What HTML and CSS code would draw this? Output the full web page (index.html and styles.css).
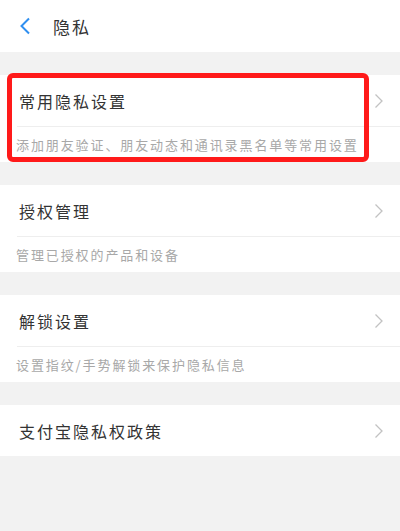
FILE: index.html
```html
<!DOCTYPE html>
<html lang="zh-CN">
<head>
<meta charset="utf-8">
<link rel="stylesheet" href="styles.css">
</head>
<body>
<div class="page">
  <header class="topbar">
    <svg class="back" width="12" height="18" viewBox="0 0 12 18"><path d="M10 1.5 L2.5 9 L10 16.5" fill="none" stroke="#2f8ff0" stroke-width="2"/></svg>
    <span class="title">隐私</span>
  </header>

  <section class="group hl">
    <div class="row"><span class="label">常用隐私设置</span><svg class="chev" width="10" height="16" viewBox="0 0 10 16"><path d="M1.5 1.5 L8 8 L1.5 14.5" fill="none" stroke="#c2c2c2" stroke-width="1.3"/></svg></div>
    <div class="desc">添加朋友验证、朋友动态和通讯录黑名单等常用设置</div>
    <div class="mark"></div>
  </section>

  <section class="group">
    <div class="row"><span class="label">授权管理</span><svg class="chev" width="10" height="16" viewBox="0 0 10 16"><path d="M1.5 1.5 L8 8 L1.5 14.5" fill="none" stroke="#c2c2c2" stroke-width="1.3"/></svg></div>
    <div class="desc">管理已授权的产品和设备</div>
  </section>

  <section class="group">
    <div class="row"><span class="label">解锁设置</span><svg class="chev" width="10" height="16" viewBox="0 0 10 16"><path d="M1.5 1.5 L8 8 L1.5 14.5" fill="none" stroke="#c2c2c2" stroke-width="1.3"/></svg></div>
    <div class="desc">设置指纹/手势解锁来保护隐私信息</div>
  </section>

  <section class="group">
    <div class="row single"><span class="label">支付宝隐私权政策</span><svg class="chev" width="10" height="16" viewBox="0 0 10 16"><path d="M1.5 1.5 L8 8 L1.5 14.5" fill="none" stroke="#c2c2c2" stroke-width="1.3"/></svg></div>
  </section>
</div>
</body>
</html>
```

FILE: styles.css
```css
html, body {
  margin: 0;
  padding: 0;
  background: #f2f2f2;
  font-family: "Noto Sans CJK SC", "Noto Sans", sans-serif;
}
.page {
  width: 400px;
  height: 531px;
  background: #f2f2f2;
  overflow: hidden;
}
.topbar {
  height: 52px;
  background: #ffffff;
  display: flex;
  align-items: center;
  padding-left: 19px;
  box-sizing: border-box;
  margin-bottom: 23px;
}
.back {
  display: block;
  margin-top: -1px;
}
.title {
  margin-left: 22px;
  font-size: 17px;
  letter-spacing: 2px;
  color: #333333;
}
.group {
  background: #ffffff;
  margin-bottom: 23px;
  position: relative;
}
.row {
  height: 52px;
  display: flex;
  align-items: center;
  justify-content: space-between;
  margin-left: 17px;
  padding: 0 16px 0 2px;
  border-bottom: 1px solid #eeeeee;
  box-sizing: border-box;
}
.row.single {
  border-bottom: none;
  height: 51px;
}
.label {
  font-size: 16px;
  letter-spacing: 2px;
  color: #333333;
}
.chev {
  display: block;
}
.desc {
  height: 35px;
  display: flex;
  align-items: center;
  padding-left: 16px;
  font-size: 13px;
  letter-spacing: 1.9px;
  color: #a8a8a8;
  white-space: nowrap;
}
.mark {
  position: absolute;
  left: 7px;
  top: -2px;
  width: 362px;
  height: 89px;
  border: 5px solid #ff1a1a;
  border-radius: 6px;
  box-sizing: border-box;
  pointer-events: none;
}
```
